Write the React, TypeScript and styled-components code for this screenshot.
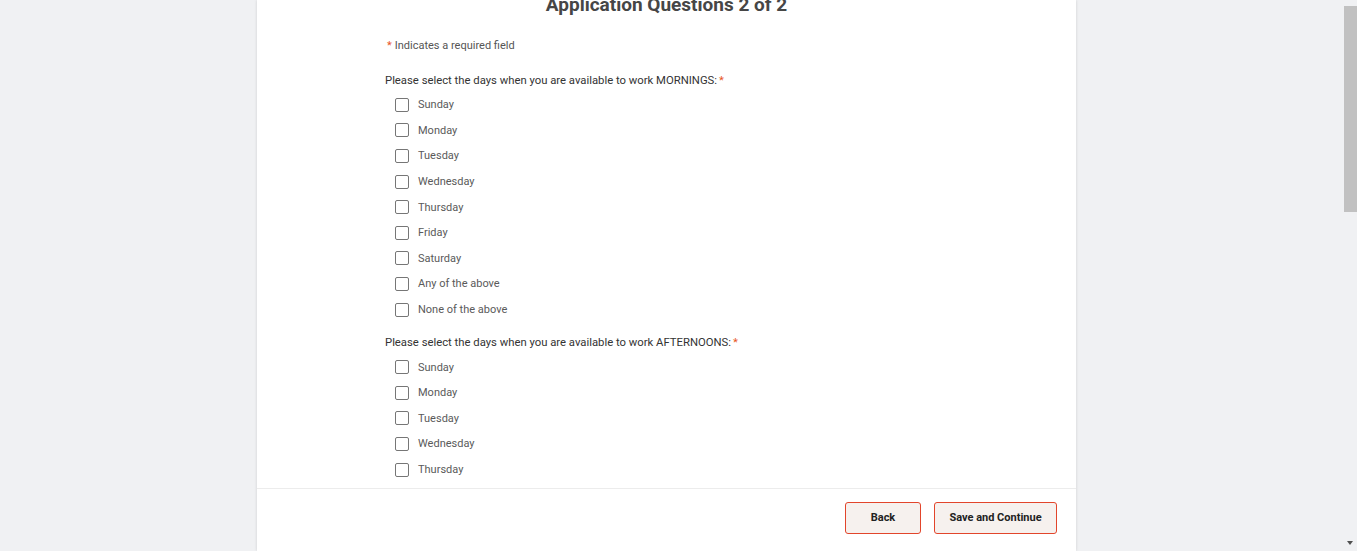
import React from 'react'
import styled, { createGlobalStyle } from 'styled-components'

const GlobalStyle = createGlobalStyle`
  html, body {
    margin: 0;
    padding: 0;
    height: 100%;
    overflow: hidden;
    background: #f0f1f3;
    font-family: Roboto, "Liberation Sans", Arial, sans-serif;
  }
  #root {
    height: 100%;
  }
`

const days = ['Sunday', 'Monday', 'Tuesday', 'Wednesday', 'Thursday', 'Friday', 'Saturday', 'Any of the above', 'None of the above']

const Page = styled.div`
  display: flex;
  height: 551px;
  width: 1357px;
`

const Main = styled.div`
  flex: 1;
  padding-left: 257px;
`

const Card = styled.div`
  width: 819px;
  height: 100%;
  background: #fff;
  box-shadow: 0 0 3px rgba(0, 0, 0, 0.14);
  display: flex;
  flex-direction: column;
`

const Body = styled.div`
  flex: 1;
  overflow: hidden;
`

const Content = styled.div`
  margin-top: -7px;
  padding: 0 128px;
`

const Title = styled.h1`
  margin: 0;
  text-align: center;
  font-size: 19px;
  line-height: 24px;
  font-weight: 700;
  color: #464646;
`

const Note = styled.p`
  margin: 22px 0 21px 2px;
  font-size: 11px;
  line-height: 14px;
  color: #555;
`

const Star = styled.span<{ $after?: boolean }>`
  color: #e8551f;
  margin-left: ${(p) => (p.$after ? '2px' : '0')};
  margin-right: ${(p) => (p.$after ? '0' : '3px')};
`

const Fieldset = styled.fieldset`
  border: 0;
  margin: 0;
  padding: 0;
  & + & {
    margin-top: 14px;
  }
`

const Legend = styled.legend`
  padding: 0;
  font-size: 11.3px;
  line-height: 14px;
  color: #333;
  margin-bottom: 4px;
`

const Rows = styled.div`
  display: flex;
  flex-direction: column;
`

const Row = styled.label`
  display: flex;
  align-items: center;
  height: 25.6px;
  padding-left: 10px;
  gap: 9px;
  font-size: 11px;
  color: #5a5a5a;
`

const Box = styled.span`
  width: 12px;
  height: 12px;
  border: 1px solid #767676;
  border-radius: 2px;
  background: #fff;
  flex-shrink: 0;
`

const Footer = styled.div`
  height: 63px;
  border-top: 1px solid #ececec;
  display: flex;
  justify-content: flex-end;
  align-items: flex-start;
  gap: 13px;
  padding: 13px 19px 0 0;
  box-sizing: border-box;
`

const Button = styled.button<{ $w: number }>`
  width: ${(p) => p.$w}px;
  height: 32px;
  padding: 0 0 2px;
  border: 1px solid #e2452b;
  border-radius: 3px;
  background: #f6f1ee;
  font-family: inherit;
  font-size: 11px;
  font-weight: 700;
  color: #222;
  cursor: pointer;
`

const Scrollbar = styled.div`
  width: 14px;
  display: flex;
  flex-direction: column;
  align-items: center;
  background: #f0f1f3;
`

const Thumb = styled.div`
  margin-top: 6px;
  width: 13px;
  height: 206px;
  background: #c1c1c1;
`

const Spacer = styled.div`
  flex: 1;
`

const Arrow = styled.div`
  width: 0;
  height: 0;
  border-left: 3.5px solid transparent;
  border-right: 3.5px solid transparent;
  border-top: 4px solid #505050;
  margin-bottom: 6px;
`

function Question({ text }: { text: string }) {
  return (
    <Fieldset>
      <Legend>
        {text}
        <Star $after>*</Star>
      </Legend>
      <Rows>
        {days.map((d) => (
          <Row key={d}>
            <Box />
            {d}
          </Row>
        ))}
      </Rows>
    </Fieldset>
  )
}

export default function App() {
  return (
    <>
      <GlobalStyle />
      <Page>
        <Main>
          <Card>
            <Body>
              <Content>
                <Title>Application Questions 2 of 2</Title>
                <Note>
                  <Star>*</Star>
                  Indicates a required field
                </Note>
                <Question text="Please select the days when you are available to work MORNINGS:" />
                <Question text="Please select the days when you are available to work AFTERNOONS:" />
              </Content>
            </Body>
            <Footer>
              <Button $w={76}>Back</Button>
              <Button $w={123}>Save and Continue</Button>
            </Footer>
          </Card>
        </Main>
        <Scrollbar>
          <Thumb />
          <Spacer />
          <Arrow />
        </Scrollbar>
      </Page>
    </>
  )
}
